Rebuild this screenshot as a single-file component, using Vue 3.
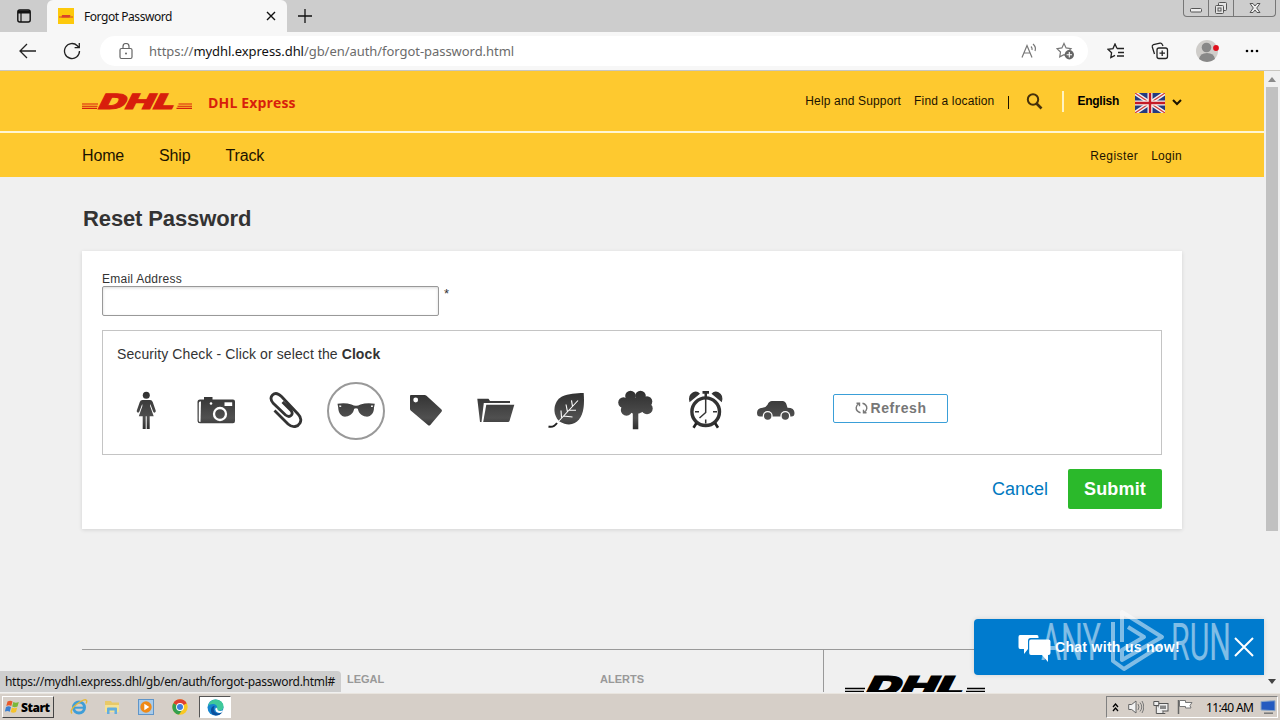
<template>
  <div class="desktop">
    <!-- Tab strip -->
    <div class="tab-strip">
      <div class="tab-actions">
        <svg width="16" height="16" viewBox="0 0 16 16">
          <rect x="1.8" y="2" width="12.4" height="12" rx="2" fill="none" stroke="#111" stroke-width="1.4" />
          <path d="M2 2.5h12v3H2z" fill="#111" />
          <path d="M5 5v9" stroke="#111" stroke-width="1.2" />
        </svg>
      </div>
      <div class="tab">
        <span class="favicon">
          <svg width="16" height="16" viewBox="0 0 16 16">
            <path d="M1 9h14" stroke="#d8422a" stroke-width="1" />
            <path d="M4 7h8.500l-1 2.500H3.500z" fill="#d8422a" />
          </svg>
        </span>
        <span class="tab-title">Forgot Password</span>
        <svg class="tab-close" width="10" height="10" viewBox="0 0 10 10">
          <path d="M1 1l8 8M9 1l-8 8" stroke="#111" stroke-width="1.4" />
        </svg>
      </div>
      <svg class="new-tab" width="14" height="14" viewBox="0 0 14 14">
        <path d="M7 0v14M0 7h14" stroke="#111" stroke-width="1.3" />
      </svg>
      <div class="window-controls">
        <span class="control"><svg width="12" height="16" viewBox="0 0 12 16"><rect x=".5" y="8.5" width="11" height="3.5" rx="1" fill="#eee" stroke="#555" /></svg></span>
        <span class="control"><svg width="14" height="16" viewBox="0 0 14 16"><g fill="#e4e4e4" stroke="#555"><rect x="4.5" y="2.5" width="8" height="8" rx="1" /><rect x="1.5" y="5.5" width="8" height="8" rx="1" /><rect x="4" y="8" width="3" height="3" /></g></svg></span>
        <span class="control wide"><svg width="12" height="16" viewBox="0 0 12 16"><path d="M1 3.5h3l2 2.5 2-2.5h3L7.7 8 11 12.5H8L6 10l-2 2.5H1L4.3 8z" fill="#eee" stroke="#555" /></svg></span>
      </div>
    </div>

    <!-- Toolbar -->
    <div class="toolbar">
      <svg class="back" width="18" height="16" viewBox="0 0 18 16">
        <path d="M17 8H1.5M8 1L1 8l7 7" fill="none" stroke="#222" stroke-width="1.3" />
      </svg>
      <svg class="reload" width="18" height="18" viewBox="0 0 18 18">
        <path d="M16.500 9a7.500 7.500 0 1 1-2.200-5.300L16 5.500M16.300 1v4.700h-4.700" fill="none" stroke="#222" stroke-width="1.3" />
      </svg>
      <div class="address-bar">
        <svg class="lock" width="14" height="17" viewBox="0 0 14 17">
          <g fill="none" stroke="#666" stroke-width="1.2">
            <rect x="1" y="5.5" width="12" height="10" rx="1.5" />
            <path d="M4 5.500V3.500a3 3 0 0 1 6 0v2" />
          </g>
          <circle cx="7" cy="10.5" r="1" fill="#666" />
        </svg>
        <span class="url">https://<b>mydhl.express.dhl</b>/gb/en/auth/forgot-password.html</span>
        <svg class="read-aloud" width="17" height="16" viewBox="0 0 17 16">
          <g fill="none" stroke="#777" stroke-width="1.2">
            <path d="M1 14.500L6 2.500l5 12M2.800 10h6.400M10 3.500q1.500 1.500 1 3.500M12 1q3.500 3 2 7" />
          </g>
        </svg>
        <svg class="add-favorite" width="19" height="18" viewBox="0 0 19 18">
          <path d="M8 1.500l2.100 4.400 4.900.7-3.500 3.400.8 4.800L8 12.600l-4.300 2.200.8-4.800L1 6.600l4.900-.7z" fill="none" stroke="#777" stroke-width="1.2" />
          <circle cx="13.3" cy="12.7" r="4.7" fill="#666" />
          <path d="M13.300 10v5.400M10.600 12.700H16" stroke="#fff" stroke-width="1.1" />
        </svg>
      </div>
      <svg class="favorites" width="18" height="16" viewBox="0 0 18 16">
        <path d="M10 5.500L8 1 6 5.600l-5 .7 3.600 3.400-.8 4.900L8 12.400M10 5.500h7M11 9.500h6M10 13h7" fill="none" stroke="#222" stroke-width="1.3" />
      </svg>
      <svg class="collections" width="18" height="18" viewBox="0 0 18 18">
        <g fill="none" stroke="#222" stroke-width="1.3">
          <rect x="6" y="6" width="10.5" height="10.5" rx="2" />
          <path d="M11.200 8.500v5.500M8.500 11.200H14M3.500 12L1.300 5q-.4-1.700 1.200-2.300L9 1.200q1.600-.3 2.300 1.300L12 4" />
        </g>
      </svg>
      <svg class="profile" width="24" height="24" viewBox="0 0 24 24">
        <circle cx="12" cy="12" r="11" fill="#cfcdca" />
        <circle cx="11.5" cy="8.5" r="4.8" fill="#888" />
        <path d="M4 20q1-6 8-6t8 6q-8 6-16 0z" fill="#888" />
        <circle cx="21" cy="9" r="2.9" fill="#e0101c" />
      </svg>
      <svg class="more" width="14" height="4" viewBox="0 0 14 4">
        <circle cx="2" cy="2" r="1.3" /><circle cx="7" cy="2" r="1.3" /><circle cx="12" cy="2" r="1.3" />
      </svg>
    </div>

    <!-- Web page -->
    <div class="viewport">
      <div class="page">
        <header class="top-header">
          <div class="container">
            <svg class="logo" width="110" height="17" viewBox="0 0 110 17">
              <path d="M0 11h16M0 13.200h15.500M0 15.400h15M96.500 11H110M95.500 13.200H110M94.500 15.400H110" stroke="#d81e0c" stroke-width="1.1" />
              <text class="logo-word" x="17" y="15.6" textLength="76" lengthAdjust="spacingAndGlyphs" transform="translate(2.500 0) skewX(-12)" fill="#d81e0c" stroke="#d81e0c">DHL</text>
            </svg>
            <span class="brand">DHL Express</span>
            <nav class="utility">
              <a class="help">Help and Support</a>
              <a class="find">Find a location</a>
              <span class="pipe"></span>
              <svg class="search" width="17" height="17" viewBox="0 0 17 17">
                <circle cx="7" cy="6.5" r="5.2" fill="none" stroke="#46310b" stroke-width="2" />
                <path d="M10.500 10.500l5 5" stroke="#46310b" stroke-width="2.6" />
              </svg>
              <span class="divider"></span>
              <b class="language">English</b>
              <svg class="flag" width="30" height="20" viewBox="0 0 30 20">
                <path d="M0 0h30v20H0z" fill="#253a80" />
                <path d="M0 0l30 20M30 0L0 20" stroke="#f5f1ee" stroke-width="4" />
                <path d="M0 0l30 20M30 0L0 20" stroke="#cf3a3c" stroke-width="1.2" />
                <path d="M15 0v20M0 10h30" stroke="#f5f1ee" stroke-width="5" />
                <path d="M15 0v20M0 10h30" stroke="#c51a26" stroke-width="2.4" />
              </svg>
              <svg class="chevron" width="10" height="7" viewBox="0 0 10 7">
                <path d="M1 1l4 4 4-4" fill="none" stroke="#1c1300" stroke-width="2" />
              </svg>
            </nav>
          </div>
        </header>

        <nav class="main-nav">
          <div class="container">
            <a class="home">Home</a>
            <a class="ship">Ship</a>
            <a class="track">Track</a>
            <a class="register">Register</a>
            <a class="login">Login</a>
          </div>
        </nav>

        <main class="container content">
          <h1>Reset Password</h1>
          <form class="card" @submit.prevent>
            <label for="email">Email Address</label>
            <div class="email-row">
              <input id="email" v-model="email" type="text" />
              <span class="required">*</span>
            </div>

            <section class="security">
              <p>Security Check - Click or select the <b>Clock</b></p>
              <div class="options">
                <div
                  v-for="icon in icons"
                  :key="icon"
                  class="option"
                  :class="{ selected: icon === selected }"
                  @click="selected = icon"
                >
                  <svg width="40" height="40" viewBox="0 0 40 40">
                    <defs>
                      <linearGradient :id="'shade-' + icon" gradientUnits="userSpaceOnUse" x1="0" y1="0" x2="0" y2="40">
                        <stop offset="0" stop-color="#2e2e2e" />
                        <stop offset=".7" stop-color="#505050" />
                        <stop offset="1" stop-color="#2b2b2b" />
                      </linearGradient>
                    </defs>
                    <g :fill="'url(#shade-' + icon + ')'">
                      <template v-if="icon === 'woman'">
                        <circle cx="20.3" cy="5.2" r="3.5" />
                        <path d="M16.500 10h7.600q1.900 0 2.600 2l3 8.600q.4 1.500-.8 2-1.300.3-1.800-1L24.300 14l-.2 2 3.600 10.300h-4V39h-3V26.300h-1V39h-3V26.300h-3.900L16.400 16l-.2-2-2.800 7.600q-.5 1.300-1.800 1-1.200-.5-.8-2l3-8.600q.7-2 2.700-2z" />
                      </template>
                      <template v-else-if="icon === 'camera'">
                        <path d="M4 9.500h4V7h8.500v2.500H37q2 0 2 2V31q0 2.200-2 2.200H4q-2.500 0-2.500-2.200V12q0-2.500 2.500-2.500z" />
                        <path d="M5 11.500H4q-1.200.3-1.200 1.500v17.500q0 1.500 1.700 1.500z" fill="#fff" />
                        <rect x="28.5" y="12.3" width="7.7" height="3.7" fill="#fff" />
                        <circle cx="15" cy="13.5" r="1.3" fill="#fff" />
                        <circle cx="24" cy="24" r="6" fill="none" stroke="#fff" stroke-width="2.3" />
                      </template>
                      <path
                        v-else-if="icon === 'paperclip'"
                        d="M8.500 20.500L22 34C27 38.500 32 36.500 34 33 36 29 34 26 32 24L15.500 6.500C12 3 9 2.500 6.500 5 4 7.500 5 10.500 7 13l12.500 12c4.500 3.500 8.500-.5 5.500-4.500l-8.500-8.500"
                        fill="none"
                        stroke="#333"
                        stroke-width="2.8"
                      />
                      <template v-else-if="icon === 'sunglasses'">
                        <path d="M1.500 13.800Q9 12.500 15.500 14.500 20 17 24.500 14.500 31 12.500 38.800 13.800L38 17.500C38 23 35 27 30 26.600 25 26 22.500 22.500 21.800 18.800Q20 17.800 18.200 18.800C17.500 22.500 15 26 10 26.600 5 27 2.500 23 2.200 17.500z" />
                        <path d="M3 15.500h2.200v1.600H3.500zM37.200 15.500H35v1.600h1.700z" fill="#eee" />
                      </template>
                      <template v-else-if="icon === 'tag'">
                        <path d="M4 6q0-1 1-1h13.500q1.200 0 2 .8L35.500 19.600q1 1.200 0 2.200L24.300 35q-1.200 1.200-2.400 0L4.700 20.500q-.7-.6-.7-1.500z" />
                        <circle cx="9.7" cy="10" r="2.4" fill="#fff" />
                      </template>
                      <template v-else-if="icon === 'folder'">
                        <path d="M1.300 8.700h11.200l1.500 2.200h20v2.200H7.800L5.500 32H4z" />
                        <path d="M10.300 14.700h28L33.500 31q-.3 1-1.500 1H7.200z" />
                      </template>
                      <template v-else-if="icon === 'leaf'">
                        <path d="M37.700 3C38.500 14 38 23 33 29.500 29 34.500 22 36.500 13.500 31.500 5.500 24 7.500 11 16 6.500 22.500 3.500 30 3.200 37.700 3z" />
                        <path d="M2.500 36.500q5 1.500 8.500-3.500" fill="none" stroke="#222" stroke-width="2" />
                        <path d="M11.500 32.500L32 10.500M21.500 21.800L20 14.500M26.500 16.500l-1-6.200M17.500 26l9 1M23 20.300h7M15.500 27.500l-.5-7" fill="none" stroke="#fff" stroke-width="1.1" />
                      </template>
                      <template v-else-if="icon === 'tree'">
                        <circle cx="14.5" cy="6" r="5.3" /><circle cx="24.5" cy="6" r="5.3" />
                        <circle cx="7.5" cy="12.5" r="5.3" /><circle cx="31" cy="11.5" r="5.3" />
                        <circle cx="10.5" cy="20" r="5.7" /><circle cx="31" cy="18.5" r="5.7" />
                        <path d="M9 8h22v12l-8 3.500h-.7v15.800h-5.500V23.500L9 20z" />
                      </template>
                      <template v-else-if="icon === 'clock'">
                        <path d="M3.500 12.200Q1.500 5 7 2.200q4-2 7 1.500zM35.800 12.200Q38 5 32.500 2.200q-4-2-7 1.500zM16.500 1h6.500v2.800h-2v4h-2.500v-4h-2z" />
                        <circle cx="19.7" cy="21.7" r="13.8" fill="none" stroke="#333" stroke-width="3.4" />
                        <path d="M10.500 33L7.500 37.800M29 33l3 4.800" stroke="#222" stroke-width="2.6" />
                        <path d="M19.700 8v14.500L13.500 28M9 21.700h4M27 21.700h4M19.700 29.500v4" fill="none" stroke="#333" stroke-width="1.5" />
                      </template>
                      <template v-else-if="icon === 'car'">
                        <path d="M1 23q0-5 5.500-5.300 3.500-.2 5-3 1.500-3.700 4.500-3.700h10.500q3 0 4 3.500l1 3.300q7 0 7 5.200 0 3.500-3 3.500H4q-3 0-3-3.500z" />
                        <circle cx="11.7" cy="26" r="5" fill="#fff" /><circle cx="29.3" cy="26" r="5" fill="#fff" />
                        <circle cx="11.7" cy="26" r="3.7" /><circle cx="29.3" cy="26" r="3.7" />
                      </template>
                    </g>
                  </svg>
                </div>
                <button type="button" class="refresh">
                  <svg width="13" height="12" viewBox="0 0 13 12">
                    <g fill="none" stroke="#777" stroke-width="1.4">
                      <path d="M5.500 10.700Q1 9.500 1.200 5.500 1.500 3 4 1.500M1.500 1.300h3v3" />
                      <path d="M7.500 1.300q4.500 1.200 4.300 5.200Q11.500 9 9 10.500M11.500 10.700h-3v-3" />
                    </g>
                  </svg>
                  <span>Refresh</span>
                </button>
              </div>
            </section>

            <div class="actions">
              <a class="cancel">Cancel</a>
              <button class="submit">Submit</button>
            </div>
          </form>
        </main>

        <footer class="container">
          <span class="legal">LEGAL</span>
          <span class="alerts">ALERTS</span>
          <div class="footer-logo">
            <svg width="140" height="22" viewBox="0 0 140 22">
              <path d="M0 14.500h20M0 17.500h19M122 14.500h18M121 17.500h19" stroke="#000" stroke-width="1.4" />
              <text class="footer-word" x="22" y="20.5" textLength="97" lengthAdjust="spacingAndGlyphs" transform="translate(3 0) skewX(-12)" stroke="#000">DHL</text>
            </svg>
          </div>
        </footer>
      </div>

      <div class="scrollbar">
        <svg width="8" height="5" viewBox="0 0 8 5"><path d="M0 5l4-5 4 5z" fill="#8a8a8a" /></svg>
        <span class="thumb"></span>
        <svg width="8" height="5" viewBox="0 0 8 5"><path d="M0 0l4 5 4-5z" fill="#444" /></svg>
      </div>

      <div class="status-bubble">https://mydhl.express.dhl/gb/en/auth/forgot-password.html#</div>

      <div class="chat">
        <svg width="34" height="29" viewBox="0 0 34 29">
          <path d="M2 1h17q1.500 0 1.500 2v1h-8q-2.500 0-2.500 3v8l-4 5v-5H2q-1.500 0-1.500-2V3Q.500 1 2 1z" fill="#fff" />
          <path d="M13 5.500h17.500q2 0 2 2V19q0 2-2 2H30v7l-6-7H13q-1.800 0-1.800-2V7.500q0-2 1.800-2z" fill="#fff" />
        </svg>
        <b>Chat with us now!</b>
        <svg class="chat-close" width="20" height="20" viewBox="0 0 20 20">
          <path d="M1 1l18 18M19 1L1 19" stroke="#fff" stroke-width="2" />
        </svg>
      </div>

      <svg class="watermark" width="192" height="64" viewBox="0 0 192 64">
        <g fill="#fff">
          <text x="1" y="52" textLength="60" lengthAdjust="spacingAndGlyphs">ANY</text>
          <text x="131" y="52" textLength="60" lengthAdjust="spacingAndGlyphs">RUN</text>
        </g>
        <g fill="none" stroke="#fff" stroke-linejoin="round">
          <path d="M73 14v39l11 8 38-24" stroke-width="4" />
          <path d="M82 34V4l40 25-40 23V42l22-13-16-10" stroke-width="4" />
        </g>
      </svg>
    </div>

    <!-- Taskbar -->
    <div class="taskbar">
      <button class="start">
        <svg width="15" height="14" viewBox="0 0 15 14">
          <path d="M2.500 1.500q3-1.500 5 0L6.300 6q-2.300-1.300-5 0z" fill="#e8592a" />
          <path d="M8.300 2q2.500 1.300 5.500 0l-1.300 4.500q-2.800 1.300-5.300 0z" fill="#7ab83a" />
          <path d="M1 7q2.800-1.300 5 0l-1.200 4.700q-2.300-1.500-5 0z" fill="#3a7fd0" />
          <path d="M6.900 7.500q2.600 1.300 5.300 0L11 12q-2.800 1.400-5.300 0z" fill="#f5c32c" />
        </svg>
        <b>Start</b>
      </button>
      <svg class="launch ie" width="18" height="18" viewBox="0 0 18 18">
        <circle cx="9" cy="9.5" r="5.5" fill="none" stroke="#3f9ed8" stroke-width="3" />
        <path d="M5 9.700h9" stroke="#3f9ed8" stroke-width="2" />
        <path d="M2 15.500Q-1 12 7 6t9.500-3.500q.7 1-.5 3" fill="none" stroke="#e6b93a" stroke-width="1.4" />
      </svg>
      <svg class="launch explorer" width="16" height="16" viewBox="0 0 16 16">
        <path d="M1 2h6l1 1.500h7V13H1z" fill="#e8c968" />
        <path d="M1 6h14v7H1z" fill="#f5e294" />
        <path d="M3 15V9.500q0-1 1-1h8q1 0 1 1V15h-2.500v-3.500h-5V15z" fill="#63aede" />
      </svg>
      <svg class="launch media" width="16" height="16" viewBox="0 0 16 16">
        <rect x=".5" y=".5" width="15" height="15" fill="#a9cbe9" stroke="#5f95c9" />
        <circle cx="8" cy="8" r="5.7" fill="#ef8a17" />
        <path d="M6.300 4.800v6.400l5-3.200z" fill="#fff" />
      </svg>
      <svg class="launch chrome" width="16" height="16" viewBox="0 0 16 16">
        <circle cx="8" cy="8" r="7.7" fill="#f9c822" />
        <path d="M8 8L1.300 4.200A7.700 7.700 0 0 1 14.700 4.200z" fill="#df3f32" />
        <path d="M8 8L1.300 4.200a7.700 7.700 0 0 0 5.700 11.400l3.500-5z" fill="#34a04f" />
        <circle cx="8" cy="8" r="3.9" fill="#fff" /><circle cx="8" cy="8" r="3" fill="#3d7de0" />
      </svg>
      <div class="active-task">
        <svg width="17" height="17" viewBox="0 0 17 17">
          <circle cx="8.5" cy="8.5" r="8" fill="#1584d0" />
          <path d="M1 7Q3 0 9 .5q7 .5 7.500 7 0 4-4 4-3 0-2.500-2 .8-3.500-3-4.500Q3 4.500 1 7z" fill="#3fc99a" />
          <path d="M7.500 7q-2 4 1 6.500 3 2 7-.5-3 4-7 3.500-5-1-4.500-6 .5-3.500 3.500-3.500z" fill="#0c4f9c" />
          <path d="M9 8.500q2 1 1.500 2.500 2 2 5.500.3l-.5 1.700q-4 2-6.500-.5Q7.500 10 9 8.500z" fill="#fff" />
        </svg>
      </div>
      <div class="tray">
        <svg class="tray-up" width="7" height="9" viewBox="0 0 7 9"><path d="M1 4l2.500-3L6 4M1 8l2.500-3L6 8" fill="none" stroke="#000" stroke-width="1.3" /></svg>
        <svg class="sound" width="16" height="14" viewBox="0 0 16 14"><path d="M.7 4.500h3L8 1v12L3.700 9.500h-3z" fill="#f3f3f3" stroke="#666" /><path d="M10 4q2 3 0 6M12 2.500q3.500 4.500 0 9M14 1q3.500 6 0 12" fill="none" stroke="#777" /></svg>
        <svg class="network" width="16" height="15" viewBox="0 0 16 15"><g fill="#eee" stroke="#555"><rect x="5" y="3.500" width="10" height="7.500" /><path d="M.8 1.500h5v4h-5zM3.300 5.500v8h9M10 11v2.500" /></g><rect x="7" y="5.5" width="6" height="3.5" fill="#888" /></svg>
        <svg class="action-flag" width="16" height="16" viewBox="0 0 16 16"><path d="M1.500 1v14" stroke="#666" stroke-width="1.5" /><path d="M2.500 1.500h6v2h6.500l-2 3 1 2.500H8.500v-1.500h-6z" fill="#fff" stroke="#777" /></svg>
        <span class="clock">11:40 AM</span>
        <svg class="display" width="16" height="14" viewBox="0 0 16 14"><path d="M1 1.500L15 .7v10L1 10z" fill="#245bc0" stroke="#8fa9c6" /><path d="M4 13.200h9" stroke="#777" stroke-width="1.5" /></svg>
      </div>
    </div>
  </div>
</template>

<script setup>
import { ref } from 'vue'

const email = ref('')
const selected = ref('sunglasses')

const icons = [
  'woman',
  'camera',
  'paperclip',
  'sunglasses',
  'tag',
  'folder',
  'leaf',
  'tree',
  'clock',
  'car'
]
</script>

<style>
body {
  overflow: hidden;
}
</style>

<style scoped>
.desktop {
  width: 1280px;
  height: 720px;
  display: flex;
  flex-direction: column;
  overflow: hidden;
  font-family: "Liberation Sans", Arial, sans-serif;
  color: #333;
}

.desktop * {
  box-sizing: border-box;
}

svg {
  display: block;
  flex: none;
}

span,
a,
b,
label {
  white-space: nowrap;
}

/* Tab strip */
.tab-strip {
  height: 32px;
  flex: none;
  display: flex;
  align-items: center;
  background: #cdcdcd;
}

.tab-actions {
  width: 47px;
  padding-left: 16px;
}

.tab {
  width: 240px;
  height: 32px;
  padding: 0 11px;
  display: flex;
  align-items: center;
  background: #f7f7f7;
  border-radius: 6px 6px 0 0;
}

.favicon {
  background: #fdc90c;
}

.tab-title {
  margin-left: 10px;
  font: 12px "Noto Sans", sans-serif;
  letter-spacing: -0.45px;
  color: #111;
}

.tab-close {
  margin-left: auto;
}

.new-tab {
  margin-left: 11px;
}

.window-controls {
  align-self: flex-start;
  display: flex;
  height: 17px;
  margin: 0 4px 0 auto;
  border: 1px solid #777;
  border-top: none;
  border-radius: 0 0 4px 4px;
}

.control {
  width: 25px;
  display: flex;
  justify-content: center;
  border-right: 1px solid #777;
}

.control.wide {
  width: 41px;
  border-right: none;
}

/* Toolbar */
.toolbar {
  height: 39px;
  flex: none;
  display: flex;
  align-items: center;
  background: #f7f7f7;
  border-bottom: 1px solid #c8c6c0;
}

.back {
  margin-left: 19px;
}

.reload {
  margin-left: 26px;
}

.address-bar {
  width: 988px;
  height: 30px;
  margin-left: 19px;
  padding: 0 13px 0 19px;
  display: flex;
  align-items: center;
  background: #fff;
  border-radius: 15px;
}

.url {
  margin-left: 16px;
  font: 13px "Noto Sans", sans-serif;
  letter-spacing: -0.05px;
  color: #6b6b6b;
}

.url b {
  font-weight: 400;
  color: #111;
}

.read-aloud {
  margin-left: auto;
}

.add-favorite {
  margin-left: 18px;
}

.favorites {
  margin-left: 19px;
}

.collections {
  margin-left: 26px;
}

.profile {
  margin-left: 26px;
}

.more {
  margin-left: 26px;
}

/* Page */
.viewport {
  position: relative;
  height: 622px;
  flex: none;
  display: flex;
  overflow: hidden;
  background: #f0f0f0;
}

.page {
  width: 1264px;
  height: 621px;
  display: flex;
  flex-direction: column;
  overflow: hidden;
}

.container {
  width: 1100px;
  margin-left: 82px;
}

.top-header {
  height: 62px;
  flex: none;
  background: #fec92f;
  border-bottom: 2px solid #fff6d2;
}

.top-header .container {
  height: 60px;
  display: flex;
  align-items: center;
}

.logo {
  overflow: visible;
}

.logo-word,
.footer-word {
  font-family: Inter, "Liberation Sans", sans-serif;
  font-size: 21px;
  font-weight: 900;
  font-style: italic;
  stroke-width: 0.8;
}

.brand {
  margin: 2px 0 0 16px;
  font: 700 14px "Open Sans", "Noto Sans", sans-serif;
  letter-spacing: 0.15px;
  color: #d81e0c;
}

.utility {
  margin-left: auto;
  display: flex;
  align-items: center;
  font-size: 12px;
  color: #1c1300;
}

.find {
  margin-left: 13px;
}

.help,
.find {
  letter-spacing: 0.15px;
}

.pipe {
  width: 1px;
  height: 13px;
  margin: 3px 0 0 14px;
  background: #1c1300;
}

.search {
  margin-left: 17px;
}

.divider {
  width: 2px;
  height: 21px;
  margin-left: 19px;
  background: #fff3c0;
}

.language {
  margin-left: 13px;
  letter-spacing: -0.25px;
  color: #000;
}

.flag {
  margin: 4px 0 0 16px;
}

.chevron {
  margin: 3px 0 0 7px;
}

.main-nav {
  height: 44px;
  flex: none;
  background: #fec92f;
}

.main-nav .container {
  height: 44px;
  padding-top: 1px;
  display: flex;
  align-items: center;
  font-size: 16px;
  letter-spacing: -0.15px;
  color: #1c1300;
}

.ship,
.track {
  margin-left: 35px;
}

.register {
  margin-left: auto;
  font-size: 12px;
  letter-spacing: 0.4px;
}

.login {
  margin-left: 13px;
  font-size: 12px;
  letter-spacing: 0.3px;
}

.content {
  height: 472px;
  flex: none;
}

h1 {
  margin: 0;
  height: 74px;
  padding: 29px 0 0 1px;
  font-size: 22px;
  line-height: 26px;
  letter-spacing: -0.12px;
}

/* Form card */
.card {
  height: 278px;
  padding: 20px;
  display: flex;
  flex-direction: column;
  background: #fff;
  box-shadow: 0 1px 4px rgba(0, 0, 0, 0.12);
}

label {
  height: 15px;
  font-size: 12px;
  line-height: 16px;
  letter-spacing: 0.25px;
}

.email-row {
  display: flex;
}

input {
  width: 337px;
  height: 30px;
  border: 1px solid #999;
  border-radius: 2px;
  outline: none;
  box-shadow: inset 0 1px 3px rgba(0, 0, 0, 0.15);
}

.required {
  margin-left: 5px;
  font-size: 13px;
  line-height: 15px;
}

.security {
  height: 125px;
  flex: none;
  margin-top: 14px;
  padding: 14px 0 0 14px;
  border: 1px solid #c4c4c4;
}

.security p {
  margin: 0;
  font-size: 14px;
  line-height: 18px;
  letter-spacing: 0.1px;
}

.options {
  height: 58px;
  margin-top: 19px;
  display: flex;
  align-items: center;
}

.option {
  width: 58px;
  height: 58px;
  margin-right: 12px;
  padding-bottom: 2px;
  display: flex;
  align-items: center;
  justify-content: center;
  border: 2px solid transparent;
  border-radius: 50%;
}

.option.selected {
  border-color: #999;
}

.refresh {
  width: 115px;
  height: 29px;
  margin: -6px 0 0 16px;
  padding: 0;
  display: flex;
  align-items: center;
  justify-content: center;
  gap: 3px;
  background: #fff;
  border: 1px solid #3a9fd8;
  border-radius: 2px;
  font: 700 14px "Liberation Sans", Arial, sans-serif;
  letter-spacing: 0.55px;
  color: #777;
}

.actions {
  margin-top: 14px;
  display: flex;
  align-items: center;
  justify-content: flex-end;
}

.cancel {
  margin-right: 20px;
  font-size: 18px;
  color: #0078c0;
}

.submit {
  width: 94px;
  height: 40px;
  padding: 0;
  background: #2bb92b;
  border: none;
  border-radius: 2px;
  font: 700 18px "Liberation Sans", Arial, sans-serif;
  letter-spacing: 0.15px;
  color: #fff;
}

/* Footer */
footer {
  height: 43px;
  display: flex;
  border-top: 1px solid #999;
  font-size: 11px;
  font-weight: 700;
  line-height: 13px;
  color: #999;
}

.legal {
  width: 253px;
  margin-left: 265px;
  padding-top: 23px;
}

.alerts {
  width: 223px;
  padding-top: 23px;
}

.footer-logo {
  height: 43px;
  padding: 24px 0 0 21px;
  border-left: 1px solid #999;
}

.footer-word {
  font-size: 26px;
  stroke-width: 1;
}

.scrollbar {
  width: 16px;
  height: 621px;
  padding: 6px 0 8px;
  display: flex;
  flex-direction: column;
  align-items: center;
  justify-content: space-between;
}

.thumb {
  width: 12px;
  height: 444px;
  margin: 5px 0 auto;
  background: #c1c1c1;
}

/* Overlays */
.status-bubble {
  position: absolute;
  left: 0;
  bottom: 1px;
  width: 341px;
  height: 21px;
  padding-left: 5px;
  background: #cecece;
  border-radius: 0 4px 0 0;
  font: 12px/21px "Noto Sans", sans-serif;
  letter-spacing: -0.3px;
  white-space: nowrap;
  color: #111;
}

.chat {
  position: absolute;
  left: 974px;
  top: 548px;
  width: 290px;
  height: 56px;
  padding: 3px 10px 0 44px;
  display: flex;
  align-items: center;
  background: #007bce;
  border-radius: 4px 0 0 4px;
  box-shadow: 0 0 5px rgba(0, 0, 0, 0.12);
  color: #fff;
  font-size: 14px;
}

.chat b {
  margin: -3px 0 0 3px;
  letter-spacing: 0.3px;
}

.chat-close {
  margin: -3px 0 0 auto;
}

.watermark {
  position: absolute;
  left: 1040px;
  top: 537px;
  opacity: 0.5;
  pointer-events: none;
}

.watermark text {
  font-family: Roboto, sans-serif;
  font-size: 52px;
  font-weight: 400;
}

/* Taskbar */
.taskbar {
  height: 27px;
  flex: none;
  display: flex;
  align-items: center;
  background: #d6cfc8;
  border-top: 1px solid #e9e5df;
}

.start {
  width: 52px;
  height: 22px;
  margin-left: 2px;
  padding: 0 0 0 2px;
  display: flex;
  align-items: center;
  gap: 1px;
  background: #d6cfc8;
  border: 1px solid;
  border-color: #fff #444 #444 #fff;
  font: 700 12px "Noto Sans", sans-serif;
  letter-spacing: -0.5px;
  color: #000;
}

.ie {
  margin-left: 16px;
}

.explorer {
  margin-left: 16px;
}

.media {
  margin-left: 18px;
}

.chrome {
  margin-left: 18px;
}

.active-task {
  width: 32px;
  height: 22px;
  margin-left: 11px;
  display: flex;
  align-items: center;
  justify-content: center;
  background: #fff;
  border: 1px solid;
  border-color: #555 #fff #fff #555;
}

.tray {
  width: 172px;
  height: 22px;
  margin: 0 2px 0 auto;
  padding: 0 1px 0 5px;
  display: flex;
  align-items: center;
  border: 1px solid;
  border-color: #808080 #fff #fff #808080;
}

.sound {
  margin-left: 9px;
}

.network {
  margin-left: 9px;
}

.action-flag {
  margin-left: 8px;
}

.clock {
  margin-left: 13px;
  font: 12px "Noto Sans", sans-serif;
  letter-spacing: -0.65px;
  color: #000;
}

.display {
  margin-left: auto;
}
</style>
